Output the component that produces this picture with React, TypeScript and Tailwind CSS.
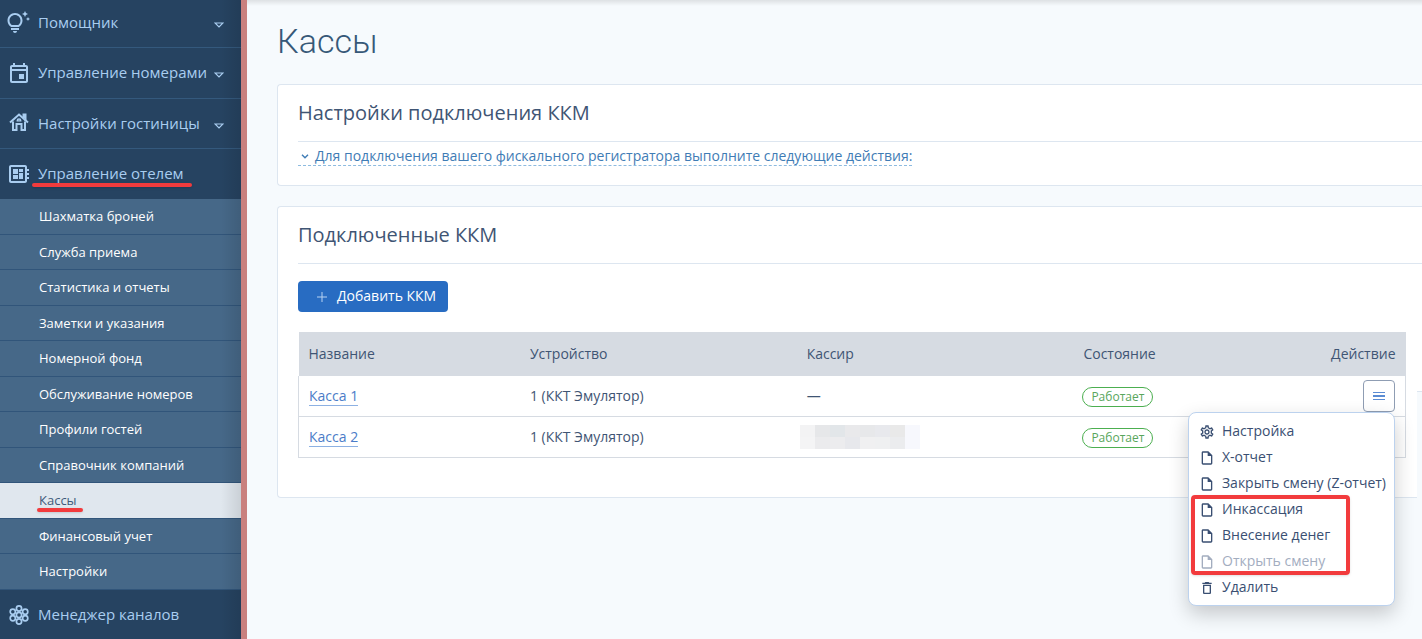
import type { ReactNode } from "react";
import {
  MdDeleteOutline,
  MdOutlineDeveloperBoard,
  MdOutlineEvent,
  MdOutlineInsertDriveFile,
  MdOutlineSettings,
  MdOutlineTipsAndUpdates,
} from "react-icons/md";

const SUBMENU = [
  "Шахматка броней",
  "Служба приема",
  "Статистика и отчеты",
  "Заметки и указания",
  "Номерной фонд",
  "Обслуживание номеров",
  "Профили гостей",
  "Справочник компаний",
  "Кассы",
  "Финансовый учет",
  "Настройки",
];

// mosaic over the cashier name
const MOSAIC = [
  "bg-[#f3f3f4]", "bg-[#e6e7e9]", "bg-[#e2e6e9]", "bg-[#e9e9eb]", "bg-[#e7e8ea]", "bg-[#e8e9ed]", "bg-[#e9e9e9]", "bg-[#f7f8fd]",
  "bg-[#f4f4f5]", "bg-[#ebebed]", "bg-[#ececee]", "bg-[#e7e8ec]", "bg-[#f0f0f1]", "bg-[#eff0f1]", "bg-[#ebecee]", "bg-[#f7f8fd]",
];

function HouseIcon() {
  return (
    <svg className="ml-px -mt-1 size-5" viewBox="0 0 20 20" fill="none" stroke="currentColor" strokeWidth="2">
      <path d="M1 10.6 10 2.6l9 8" />
      <path d="M14.5 6V2.5h2V9" />
      <path d="M4 9.5V18h3.5v-6h5v6H16V9.5" />
      <path d="M8.2 8.8a1.8 1.8 0 0 1 3.6 0z" strokeWidth="1.3" />
    </svg>
  );
}

function ChannelsIcon() {
  return (
    <svg className="ml-px size-5" viewBox="0 0 20 20" fill="none" stroke="currentColor" strokeWidth="1.7">
      <circle cx="10" cy="10" r="2.6" />
      <circle cx="10" cy="3.5" r="2.6" />
      <circle cx="10" cy="16.5" r="2.6" />
      <circle cx="3.8" cy="6.7" r="2.6" />
      <circle cx="3.8" cy="13.3" r="2.6" />
      <circle cx="16.2" cy="6.7" r="2.6" />
      <circle cx="16.2" cy="13.3" r="2.6" />
    </svg>
  );
}

interface NavItemProps {
  icon: ReactNode;
  label: string;
  className: string;
  caret?: boolean;
  marked?: boolean;
}

function NavItem({ icon, label, className, caret, marked }: NavItemProps) {
  return (
    <a href="#" className={`flex items-center pr-[17px] pl-2 text-[15px] text-[#a9cdf0] ${className}`}>
      <span className="w-[30px] shrink-0">{icon}</span>
      <span className="relative whitespace-nowrap">
        {label}
        {marked && <span className="absolute -right-2 -bottom-0.5 -left-1.5 h-1 rounded-full bg-[#f23b3d] shadow-sm" />}
      </span>
      {caret && (
        <svg className="mt-1 ml-auto h-1.5 w-2.5" viewBox="0 0 10 6" fill="none" stroke="currentColor" strokeWidth="1.2">
          <path d="M1 1h8L5 5z" />
        </svg>
      )}
    </a>
  );
}

function Sidebar() {
  return (
    <nav className="relative min-h-screen w-[247px] shrink-0 border-r-6 border-[#c9807e] bg-[#264361]">
      <NavItem className="h-12 border-b border-[#34597d] pb-0.5" icon={<MdOutlineTipsAndUpdates className="-ml-0.5 size-6" />} label="Помощник" caret />
      <NavItem className="h-[51px] border-b border-[#34597d]" icon={<MdOutlineEvent className="-ml-px size-6" />} label="Управление номерами" caret />
      <NavItem className="h-[50px] border-b border-[#34597d]" icon={<HouseIcon />} label="Настройки гостиницы" caret />
      <NavItem className="h-[50px]" icon={<MdOutlineDeveloperBoard className="-ml-px size-6" />} label="Управление отелем" marked />
      <ul>
        {SUBMENU.map((label) => {
          const active = label === "Кассы";
          return (
            <li
              key={label}
              className={`border-b border-[#31557a] odd:h-9 even:h-[35px] ${active ? "bg-[#e0e7ee] text-[#3f5a7a]" : "bg-[#466888] font-medium text-white"}`}
            >
              <a href="#" className="flex h-full items-center pl-[39px] text-[13px]">
                <span className="relative">
                  {label}
                  {active && <span className="absolute -right-1.5 -bottom-0.5 -left-0.5 h-1 rounded-full bg-[#f23b3d] shadow-sm" />}
                </span>
              </a>
            </li>
          );
        })}
      </ul>
      <NavItem className="h-[50px]" icon={<ChannelsIcon />} label="Менеджер каналов" />
      <div className="pointer-events-none absolute inset-y-0 right-0 w-5 bg-linear-to-r from-transparent to-black/10" />
    </nav>
  );
}

function MenuItem({ icon, label, disabled }: { icon: ReactNode; label: string; disabled?: boolean }) {
  return (
    <button
      type="button"
      role="menuitem"
      disabled={disabled}
      className="flex h-[26px] w-full items-center gap-[7px] whitespace-nowrap text-[#3a4f72] disabled:text-[#a3adbf]"
    >
      {icon}
      {label}
    </button>
  );
}

function ActionMenu() {
  const file = <MdOutlineInsertDriveFile className="mt-0.5 size-4" />;
  return (
    <div
      role="menu"
      className="absolute top-full right-0 z-10 w-[207px] rounded-lg border border-[#bcd2ee] bg-white py-[5px] pr-2 pl-[10px] text-left shadow-[0_8px_20px_rgba(0,0,0,0.2)]"
    >
      <MenuItem icon={<MdOutlineSettings className="mt-0.5 size-4" />} label="Настройка" />
      <MenuItem icon={file} label="X-отчет" />
      <MenuItem icon={file} label="Закрыть смену (Z-отчет)" />
      <div className="relative">
        <MenuItem icon={file} label="Инкассация" />
        <MenuItem icon={file} label="Внесение денег" />
        <MenuItem icon={file} label="Открыть смену" disabled />
        <div className="pointer-events-none absolute -top-px right-9 -bottom-px -left-2 rounded-sm border-4 border-[#f23b3d] shadow-sm" />
      </div>
      <MenuItem icon={<MdDeleteOutline className="mt-0.5 size-4" />} label="Удалить" />
    </div>
  );
}

function StatusBadge() {
  return (
    <span className="mt-0.5 inline-flex h-5 items-center rounded-full border border-[#4caf50] px-2 align-middle text-xs text-[#58a65c]">
      Работает
    </span>
  );
}

function RegisterTable() {
  return (
    <table className="mt-5 w-full table-fixed border-collapse text-left">
      <thead>
        <tr className="h-11 bg-[#d6dbe2]">
          <th className="w-1/5 px-2.5 font-normal">Название</th>
          <th className="w-1/4 px-2.5 font-normal">Устройство</th>
          <th className="w-1/4 px-2.5 font-normal">Кассир</th>
          <th className="px-2.5 font-normal">Состояние</th>
          <th className="px-2.5 text-right font-normal">Действие</th>
        </tr>
      </thead>
      <tbody className="border border-t-0 border-[#d6dbe2]">
        <tr className="h-10 border-b border-[#d6dbe2]">
          <td className="px-2.5">
            <a href="#" className="border-b border-[#8db1e3] text-[#4b7cc8]">Касса 1</a>
          </td>
          <td className="px-2.5">1 (ККТ Эмулятор)</td>
          <td className="px-2.5">—</td>
          <td className="px-[9px]"><StatusBadge /></td>
          <td className="px-2.5">
            <div className="relative ml-auto w-8">
              <button
                type="button"
                aria-label="Действия"
                className="flex size-8 items-center justify-center rounded-sm border border-[#8f9db3] bg-white text-[#5b8cd3]"
              >
                <svg className="h-2.5 w-3" viewBox="0 0 12 10" fill="currentColor">
                  <path d="M0 1h12v1H0zM0 4h12v2H0zM0 8h12v1H0z" />
                </svg>
              </button>
              <ActionMenu />
            </div>
          </td>
        </tr>
        <tr className="h-[41px]">
          <td className="px-2.5">
            <a href="#" className="border-b border-[#8db1e3] text-[#4b7cc8]">Касса 2</a>
          </td>
          <td className="px-2.5">1 (ККТ Эмулятор)</td>
          <td className="px-[3px]">
            <div className="grid w-[120px] grid-cols-8">
              {MOSAIC.map((color, i) => (
                <span key={i} className={`h-3 ${color}`} />
              ))}
            </div>
          </td>
          <td className="px-[9px]"><StatusBadge /></td>
          <td />
        </tr>
      </tbody>
    </table>
  );
}

export default function App() {
  return (
    <div className="flex min-h-screen overflow-hidden bg-[#f6fafd] font-['Open_Sans','Noto_Sans',sans-serif] text-sm text-[#3f5574]">
      <Sidebar />
      <main className="relative min-w-0 flex-1 pl-[30px]">
        <div className="absolute inset-x-0 top-0 h-1.5 bg-linear-to-b from-black/10 to-transparent" />
        <h1 className="pt-[19px] pb-px font-['Roboto',sans-serif] text-[34px] leading-11 font-light text-[#365878]">Кассы</h1>

        <section className="mt-5 rounded-l-sm border border-r-0 border-[#dde6f0] bg-white pb-[19px] pl-5">
          <h2 className="border-b border-[#dde6f0] pt-3 pb-3 text-xl leading-8">Настройки подключения ККМ</h2>
          <button type="button" className="mt-1 flex h-5 items-center border-b border-dashed border-[#8dbbe0] text-[#3f7cb5]">
            <svg className="mt-0.5 mr-1.5 ml-[3px] h-[5px] w-2" viewBox="0 0 8 5" fill="none" stroke="currentColor" strokeWidth="1.4">
              <path d="m1 .7 3 3 3-3" />
            </svg>
            Для подключения вашего фискального регистратора выполните следующие действия:
          </button>
        </section>

        <section className="relative mt-5 rounded-l-sm border border-r-0 border-[#dde6f0] bg-white pb-[39px] pl-5">
          <h2 className="border-b border-[#dde6f0] pt-3 pb-3 text-xl leading-8">Подключенные ККМ</h2>
          <button type="button" className="mt-[17px] flex h-[31px] items-center rounded-sm bg-[#286cc2] pr-3 pb-0.5 pl-[19px] font-medium text-white">
            <svg className="mt-0.5 mr-2.5 size-2.5" viewBox="0 0 10 10" stroke="#b7d2f2">
              <path d="M5 0v10M0 5h10" />
            </svg>
            Добавить ККМ
          </button>
          <div className="pr-4">
            <RegisterTable />
          </div>
          {/* page edge below the card's scroll area */}
          <div className="absolute right-0 -bottom-px h-[107px] w-[5px] border-t border-[#dde6f0] bg-[#f6fafd]" />
        </section>
      </main>
    </div>
  );
}
